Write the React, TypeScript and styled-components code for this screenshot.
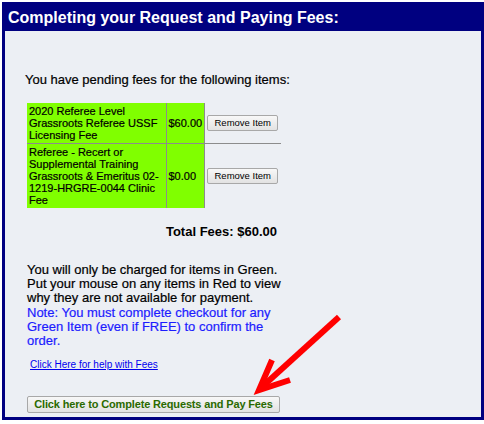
import styled, { createGlobalStyle } from 'styled-components';

const GlobalStyle = createGlobalStyle`
    html, body {
        margin: 0;
        padding: 0;
        background: #ffffff;
    }
    body {
        font-family: "Liberation Sans", Arial, sans-serif;
        color: #000000;
    }
`;

const Page = styled.div`
    position: relative;
    width: 484px;
    height: 424px;
    overflow: hidden;
`;

const Panel = styled.div`
    margin: 2px 0 0 2px;
    width: 482px;
    height: 418px;
    box-sizing: border-box;
    border: 3px solid #000080;
    border-top: none;
    display: flex;
    flex-direction: column;
    background: #000080;
`;

const Header = styled.h1`
    margin: 0;
    height: 29px;
    box-sizing: border-box;
    padding: 3px 0 0 3px;
    font-size: 16px;
    line-height: 26px;
    font-weight: bold;
    color: #ffffff;
    background: #000080;
`;

const Body = styled.div`
    flex: 1 1 auto;
    background: #eceff4;
    padding: 41px 0 0 22px;
    display: flex;
    flex-direction: column;
    align-items: flex-start;
    -webkit-text-stroke: 0.2px currentColor;
`;

const Intro = styled.p`
    margin: 0 0 16px -2px;
    font-size: 13px;
    line-height: 15px;
`;

const FeeTable = styled.table`
    width: 254px;
    border-collapse: collapse;
    border-spacing: 0;
`;

const Cell = styled.td<{ $green?: boolean; $right?: boolean; $bottom?: boolean; $width: number }>`
    width: ${p => p.$width}px;
    box-sizing: border-box;
    padding: 2px 1px 2px 2px;
    font-size: 11px;
    line-height: 12px;
    vertical-align: middle;
    background: ${p => (p.$green ? '#80ff00' : 'transparent')};
    border-right: ${p => (p.$right ? '1px solid #8c8c8c' : 'none')};
    border-bottom: ${p => (p.$bottom ? '1px solid #8c8c8c' : 'none')};
`;

const ButtonCell = styled(Cell)`
    text-align: center;
    padding: 0;
`;

const GreyButton = styled.button`
    font-family: "Liberation Sans", Arial, sans-serif;
    margin: 0;
    box-sizing: border-box;
    border: 1px solid #a8a8a8;
    border-radius: 2px;
    background: linear-gradient(#f8f8f8, #e2e2e2);
    color: #000000;
    cursor: pointer;
    -webkit-text-stroke: 0;
`;

const RemoveButton = styled(GreyButton)`
    width: 71px;
    height: 16px;
    padding: 0;
    font-size: 9.5px;
    line-height: 14px;
`;

const Total = styled.div`
    width: 254px;
    box-sizing: border-box;
    margin-top: 16px;
    padding-right: 4px;
    text-align: right;
    font-size: 13px;
    line-height: 15px;
    font-weight: bold;
    -webkit-text-stroke: 0;
`;

const Notice = styled.p`
    margin: 24px 0 0;
    width: 260px;
    font-size: 13px;
    line-height: 14px;
`;

const Note = styled.p`
    margin: 1px 0 0;
    width: 260px;
    font-size: 13px;
    line-height: 14px;
    color: #1c1cff;
`;

const HelpLink = styled.a`
    margin: 11px 0 0 3px;
    font-size: 10px;
    line-height: 12px;
    color: #0000ee;
    text-decoration: underline;
    -webkit-text-stroke: 0;
`;

const PayButton = styled(GreyButton)`
    margin-top: 25px;
    width: 253px;
    height: 17px;
    padding: 0;
    font-size: 11px;
    line-height: 15px;
    letter-spacing: -0.15px;
    font-weight: bold;
    color: #2a6a00;
`;

const Arrow = styled.svg`
    position: absolute;
    left: 0;
    top: 0;
    pointer-events: none;
`;

const fees = [
    { name: '2020 Referee Level Grassroots Referee USSF Licensing Fee', amount: '$60.00' },
    { name: 'Referee - Recert or Supplemental Training Grassroots & Emeritus 02-1219-HRGRE-0044 Clinic Fee', amount: '$0.00' }
];

export default function App() {
    return (
        <Page>
            <GlobalStyle />
            <Panel>
                <Header>Completing your Request and Paying Fees:</Header>
                <Body>
                    <Intro>You have pending fees for the following items:</Intro>
                    <FeeTable>
                        <tbody>
                            {fees.map((fee, i) => (
                                <tr key={fee.name}>
                                    <Cell $green $right $bottom={i === 0} $width={139}>
                                        {fee.name}
                                    </Cell>
                                    <Cell $green $right $bottom={i === 0} $width={38}>
                                        {fee.amount}
                                    </Cell>
                                    <ButtonCell $bottom={i === 0} $width={77}>
                                        <RemoveButton>Remove Item</RemoveButton>
                                    </ButtonCell>
                                </tr>
                            ))}
                        </tbody>
                    </FeeTable>
                    <Total>Total Fees: $60.00</Total>
                    <Notice>
                        You will only be charged for items in Green. Put your mouse on any
                        items in Red to view why they are not available for payment.
                    </Notice>
                    <Note>
                        Note: You must complete checkout for any Green Item (even if FREE) to
                        confirm the order.
                    </Note>
                    <HelpLink href="#">Click Here for help with Fees</HelpLink>
                    <PayButton>Click here to Complete Requests and Pay Fees</PayButton>
                </Body>
            </Panel>
            <Arrow width="484" height="424" viewBox="0 0 484 424">
                <line x1="339" y1="317" x2="263" y2="386" stroke="#ff0000" strokeWidth="6" />
                <polyline
                    points="272,360 259,390 290,380"
                    fill="none"
                    stroke="#ff0000"
                    strokeWidth="6"
                    strokeLinejoin="miter"
                />
            </Arrow>
        </Page>
    );
}
